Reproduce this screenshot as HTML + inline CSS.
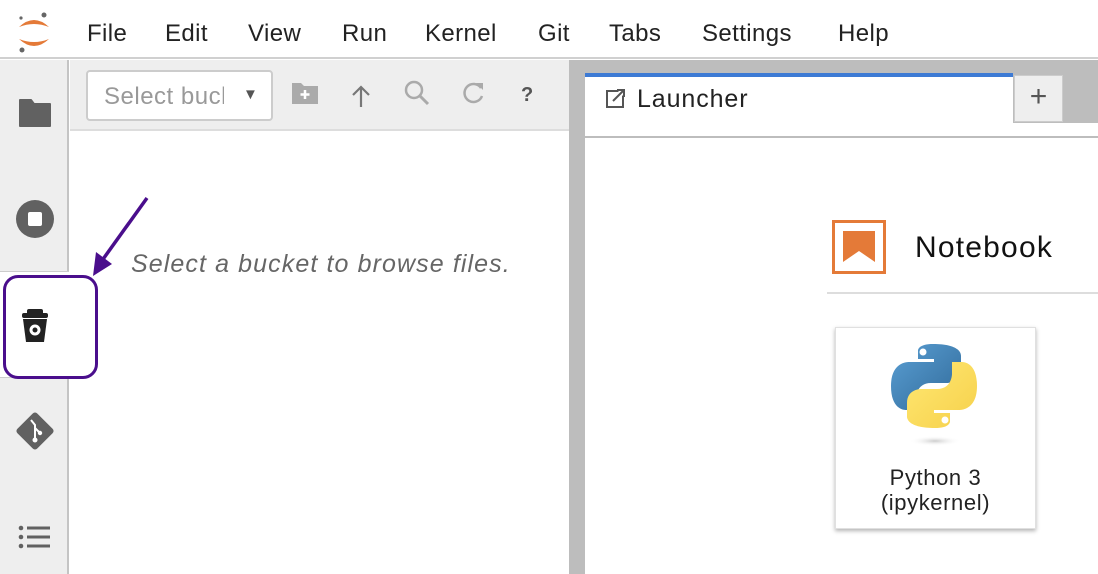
<!DOCTYPE html>
<html><head><style>
*{margin:0;padding:0;box-sizing:border-box}
body{width:1098px;height:574px;overflow:hidden;background:#fff;font-family:"Liberation Sans",sans-serif;position:relative}
.abs{position:absolute}
.menu{top:0;left:0;width:1098px;height:59px;background:#fff;border-bottom:2px solid #d0d0d0}
.menu span{position:absolute;top:20px;font-size:24px;color:#222;letter-spacing:.4px}
</style></head><body>
<div class="abs menu">
<svg class="abs" style="left:14px;top:10px" width="40" height="44" viewBox="0 0 40 44">
<path d="M5 17 Q20 3 35 17 Q20 11 5 17Z" fill="#e47a38"/>
<path d="M5 29 Q20 43 35 29 Q20 35 5 29Z" fill="#e47a38"/>
<circle cx="30" cy="5" r="2.5" fill="#666"/><circle cx="7" cy="8" r="1.6" fill="#666"/><circle cx="8" cy="40" r="2.5" fill="#666"/>
</svg>
<span style="left:87px">File</span><span style="left:165px">Edit</span><span style="left:248px">View</span><span style="left:342px">Run</span><span style="left:425px">Kernel</span><span style="left:538px">Git</span><span style="left:609px">Tabs</span><span style="left:702px">Settings</span><span style="left:838px">Help</span>
</div>
<!-- sidebar -->
<div class="abs" style="left:0;top:60px;width:69px;height:514px;background:#eee;border-right:2px solid #c4c4c4"></div>
<div class="abs" style="left:0;top:271px;width:69px;height:107px;background:#fff;border-top:1px solid #ccc;border-bottom:1px solid #ccc"></div>
<svg class="abs" style="left:18px;top:98px" width="34" height="30" viewBox="0 0 34 30"><path d="M2 2h11l3 4h16v22H2z" fill="#616161" stroke="#616161" stroke-width="2" stroke-linejoin="round"/></svg>
<svg class="abs" style="left:15px;top:199px" width="40" height="40"><circle cx="20" cy="20" r="19" fill="#616161"/><rect x="13" y="13" width="14" height="14" rx="2" fill="#fff"/></svg>
<svg class="abs" style="left:20px;top:308px" width="30" height="36" viewBox="0 0 30 36"><rect x="7" y="1" width="16" height="6" rx="2" fill="#222"/><rect x="2" y="5" width="26" height="5" rx="2" fill="#222"/><path d="M3 11h24l-3 23H6z" fill="#222"/><circle cx="15" cy="22" r="5.5" fill="#fff"/><circle cx="15" cy="22" r="2.5" fill="#222"/></svg>
<svg class="abs" style="left:14px;top:410px" width="42" height="42" viewBox="0 0 42 42"><rect x="7" y="7" width="28" height="28" rx="3" fill="#616161" transform="rotate(45 21 21)"/><path d="M17 10l4 5v14M21 18l5 5" stroke="#fff" stroke-width="2" fill="none"/><circle cx="21" cy="30" r="2.5" fill="#fff"/><circle cx="26" cy="23" r="2.2" fill="#fff"/></svg>
<svg class="abs" style="left:18px;top:524px" width="34" height="26"><circle cx="3" cy="4" r="2.3" fill="#616161"/><circle cx="3" cy="13" r="2.3" fill="#616161"/><circle cx="3" cy="22" r="2.3" fill="#616161"/><rect x="9" y="2.5" width="23" height="3" fill="#616161"/><rect x="9" y="11.5" width="23" height="3" fill="#616161"/><rect x="9" y="20.5" width="23" height="3" fill="#616161"/></svg>
<div class="abs" style="left:3px;top:275px;width:95px;height:104px;border:3.5px solid #4a0e8c;border-radius:15px"></div>
<svg class="abs" style="left:85px;top:190px" width="70" height="95"><line x1="62" y1="8" x2="16" y2="72" stroke="#4a0e8c" stroke-width="3.5"/><polygon points="8,86 11,62 27,74" fill="#4a0e8c"/></svg>
<!-- file panel -->
<div class="abs" style="left:70px;top:60px;width:499px;height:71px;background:#eee;border-bottom:2px solid #ddd"></div>
<div class="abs" style="left:86px;top:70px;width:187px;height:51px;background:#fff;border:2px solid #ccc;border-radius:4px"></div>
<div class="abs" style="left:104px;top:83px;font-size:24px;color:#999;width:120px;overflow:hidden;white-space:nowrap;letter-spacing:.5px">Select bucket</div>
<div class="abs" style="left:243px;top:86px;font-size:15px;color:#555">▼</div>
<svg class="abs" style="left:291px;top:81px" width="28" height="24" viewBox="0 0 28 24"><path d="M1 2h9l3 3h14v18H1z" fill="#aaa"/><path d="M14 9v9M9.5 13.5h9" stroke="#fff" stroke-width="2.5"/></svg>
<svg class="abs" style="left:350px;top:84px" width="22" height="24"><path d="M11 23V3M3 11l8-8 8 8" stroke="#777" stroke-width="2.2" fill="none"/></svg>
<svg class="abs" style="left:403px;top:80px" width="30" height="26"><circle cx="11" cy="10" r="8" stroke="#aaa" stroke-width="2.5" fill="none"/><path d="M17 16l8 8" stroke="#aaa" stroke-width="3"/></svg>
<svg class="abs" style="left:461px;top:80px" width="26" height="26"><path d="M20 8A9 9 0 1 0 21 16" stroke="#aaa" stroke-width="2.5" fill="none"/><path d="M15 3h7v7z" fill="#aaa"/></svg>
<div class="abs" style="left:521px;top:84px;font-size:20px;font-weight:bold;color:#555">?</div>
<div class="abs" style="left:131px;top:250px;font-size:25px;font-style:italic;color:#666;letter-spacing:1.1px;white-space:nowrap">Select a bucket to browse files.</div>
<!-- splitter -->
<div class="abs" style="left:569px;top:60px;width:16px;height:514px;background:#bdbdbd"></div>
<!-- main -->
<div class="abs" style="left:585px;top:60px;width:513px;height:63px;background:#bdbdbd"></div>
<div class="abs" style="left:585px;top:136px;width:513px;height:2px;background:#bdbdbd"></div>
<div class="abs" style="left:585px;top:73px;width:428px;height:63px;background:#fff;border-top:4px solid #3d7ad4"></div>
<div class="abs" style="left:1014px;top:75px;width:49px;height:47px;background:#eee;border:1px solid #ccc;font-size:30px;color:#555;text-align:center;line-height:42px">+</div>
<svg class="abs" style="left:605px;top:88px" width="22" height="22"><rect x="2" y="3" width="16" height="16" fill="none" stroke="#555" stroke-width="2"/><path d="M8 13L19 2M12 2h7v7" stroke="#555" stroke-width="2" fill="#fff"/></svg>
<div class="abs" style="left:637px;top:85px;font-size:25px;color:#222;letter-spacing:.9px">Launcher</div>
<svg class="abs" style="left:832px;top:220px" width="54" height="54"><rect x="1.5" y="1.5" width="51" height="51" fill="none" stroke="#e47a38" stroke-width="3"/><path d="M11 11h32v31l-16-11-16 11z" fill="#e47a38"/></svg>
<div class="abs" style="left:915px;top:231px;font-size:30px;color:#111;letter-spacing:1.2px">Notebook</div>
<div class="abs" style="left:827px;top:292px;width:271px;height:2px;background:#ddd"></div>
<div class="abs" style="left:835px;top:327px;width:201px;height:202px;background:#fff;border:1px solid #e0e0e0;box-shadow:0 2px 4px rgba(0,0,0,.3)"></div>
<svg class="abs" style="left:890px;top:343px" width="90" height="104" viewBox="0 0 90 104">
<defs><linearGradient id="b" x1="0" y1="0" x2="1" y2="1"><stop offset="0" stop-color="#5a9fd4"/><stop offset="1" stop-color="#306998"/></linearGradient><linearGradient id="y" x1="0" y1="0" x2="1" y2="1"><stop offset="0" stop-color="#ffe873"/><stop offset="1" stop-color="#f6d04a"/></linearGradient>
<radialGradient id="s"><stop offset="0" stop-color="#ccc"/><stop offset="1" stop-color="#fff" stop-opacity="0"/></radialGradient></defs>
<path d="M43 1C27 1 28 8 28 8v8h16v3H20S1 17 1 43s16 24 16 24h9V55s0-15 15-15h16s14 0 14-14V13S73 1 43 1z" fill="url(#b)"/>
<circle cx="33" cy="9" r="3.5" fill="#fff"/>
<path d="M45 85c16 0 15-7 15-7v-8H44v-3h24s19 2 19-24-16-24-16-24h-9v12s0 15-15 15H31s-14 0-14 14v13s-2 12 28 12z" fill="url(#y)"/>
<circle cx="55" cy="77" r="3.5" fill="#fff"/>
<ellipse cx="45" cy="98" rx="26" ry="5" fill="url(#s)"/>
</svg>
<div class="abs" style="left:835px;top:465px;width:201px;text-align:center;font-size:22px;color:#222;line-height:25px;letter-spacing:.6px">Python 3<br>(ipykernel)</div>
</body></html>
